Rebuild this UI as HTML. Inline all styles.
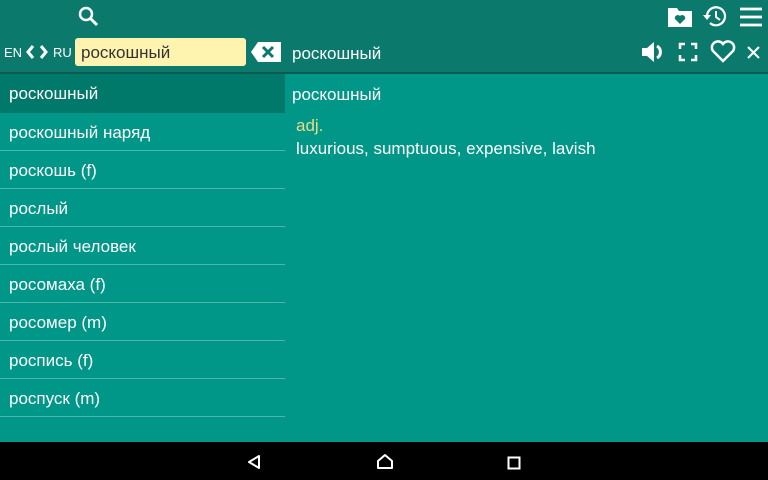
<!DOCTYPE html>
<html><head><meta charset="utf-8"><style>
*{margin:0;padding:0;box-sizing:border-box}
body{width:768px;height:480px;overflow:hidden;background:#009688;font-family:"Liberation Sans",sans-serif;color:#fff;position:relative}
.hdr{position:absolute;left:0;top:0;width:768px;height:72px;background:#0b7a6c}
.line{position:absolute;left:0;top:72px;width:768px;height:2px;background:#0c5a50}
.abs{position:absolute}
.row{position:absolute;left:0;width:285px;height:38px;border-bottom:1px solid #4db6ac;font-size:17px;padding-left:9px;line-height:39px}
.nav{position:absolute;left:0;top:442px;width:768px;height:38px;background:#000}
</style></head><body>
<div class="hdr"></div><div class="line"></div>
<svg class="abs" style="left:77px;top:5px" width="22" height="22" viewBox="0 0 22 22"><circle cx="9" cy="9" r="6" stroke="#fff" stroke-width="2.5" fill="none"/><path d="M13.5 13.5L20 20" stroke="#fff" stroke-width="3"/></svg>
<svg class="abs" style="left:667px;top:6px" width="26" height="22" viewBox="0 0 26 22"><path d="M1 2h9l2 3h13v16H1z" fill="#fff"/><path d="M13 18l-5-5a3 3 0 0 1 5-3a3 3 0 0 1 5 3z" fill="#0b7a6c"/></svg>
<svg class="abs" style="left:702px;top:4px" width="26" height="24" viewBox="0 0 26 24"><path d="M5 12a9 9 0 1 1 3 7" stroke="#fff" stroke-width="2.2" fill="none"/><path d="M1 11h8l-4 5z" fill="#fff"/><path d="M14 7v6l4 3" stroke="#fff" stroke-width="2" fill="none"/></svg>
<svg class="abs" style="left:739px;top:7px" width="24" height="20" viewBox="0 0 24 20"><path d="M1 2h22M1 10h22M1 18h22" stroke="#fff" stroke-width="2.8"/></svg>
<div class="abs" style="left:4px;top:45px;font-size:13px">EN</div>
<svg class="abs" style="left:24px;top:44px" width="30" height="16" viewBox="0 0 30 16"><path d="M9 2L4 8l5 6M17 2l5 6-5 6" stroke="#fff" stroke-width="3" fill="none"/></svg>
<div class="abs" style="left:53px;top:45px;font-size:13px">RU</div>
<div class="abs" style="left:75px;top:38px;width:171px;height:28px;background:#fff3b0;border-radius:3px;color:#333;font-size:17px;padding-left:6px;line-height:30px">роскошный</div>
<svg class="abs" style="left:250px;top:41px" width="32" height="22" viewBox="0 0 32 22"><path d="M8 1h23v20H8L1 11z" fill="#fff"/><path d="M13 6l10 10M23 6L13 16" stroke="#0b7a6c" stroke-width="3"/></svg>
<div class="abs" style="left:292px;top:44px;font-size:17px">роскошный</div>
<svg class="abs" style="left:641px;top:41px" width="24" height="22" viewBox="0 0 24 22"><path d="M1 7h5l7-6v20l-7-6H1z" fill="#fff"/><path d="M16 5a7 7 0 0 1 0 12" stroke="#fff" stroke-width="3" fill="none"/></svg>
<svg class="abs" style="left:678px;top:42px" width="20" height="20" viewBox="0 0 20 20"><path d="M2 7V2h5M13 2h5v5M18 13v5h-5M7 18H2v-5" stroke="#fff" stroke-width="2.5" fill="none"/></svg>
<svg class="abs" style="left:710px;top:40px" width="26" height="24" viewBox="0 0 26 24"><path d="M13 21L3 11a5.5 5.5 0 0 1 10-7a5.5 5.5 0 0 1 10 7z" stroke="#fff" stroke-width="2.5" fill="none"/></svg>
<svg class="abs" style="left:747px;top:46px" width="13" height="13" viewBox="0 0 13 13"><path d="M1 1l11 11M12 1L1 12" stroke="#fff" stroke-width="2"/></svg>
<div class="row" style="top:74px;height:39px;background:#00796b;border-bottom:none">роскошный</div>
<div class="row" style="top:113px">роскошный наряд</div>
<div class="row" style="top:151px">роскошь (f)</div>
<div class="row" style="top:189px">рослый</div>
<div class="row" style="top:227px">рослый человек</div>
<div class="row" style="top:265px">росомаха (f)</div>
<div class="row" style="top:303px">росомер (m)</div>
<div class="row" style="top:341px">роспись (f)</div>
<div class="row" style="top:379px">роспуск (m)</div>
<div class="abs" style="left:292px;top:85px;font-size:17px">роскошный</div>
<div class="abs" style="left:296px;top:116px;font-size:17px;color:#e6dc8a">adj.</div>
<div class="abs" style="left:296px;top:139px;font-size:17px">luxurious, sumptuous, expensive, lavish</div>
<div class="nav"></div>
<svg class="abs" style="left:246px;top:454px" width="16" height="16" viewBox="0 0 16 16"><path d="M13 2v12L3 8z" stroke="#fff" stroke-width="2" fill="none" stroke-linejoin="round"/></svg>
<svg class="abs" style="left:376px;top:453px" width="18" height="17" viewBox="0 0 18 17"><path d="M2 8l7-6 7 6v7H2z" stroke="#fff" stroke-width="2" fill="none" stroke-linejoin="round"/></svg>
<svg class="abs" style="left:507px;top:456px" width="14" height="14" viewBox="0 0 14 14"><rect x="1.5" y="1.5" width="11" height="11" stroke="#fff" stroke-width="2" fill="none"/></svg>
</body></html>
